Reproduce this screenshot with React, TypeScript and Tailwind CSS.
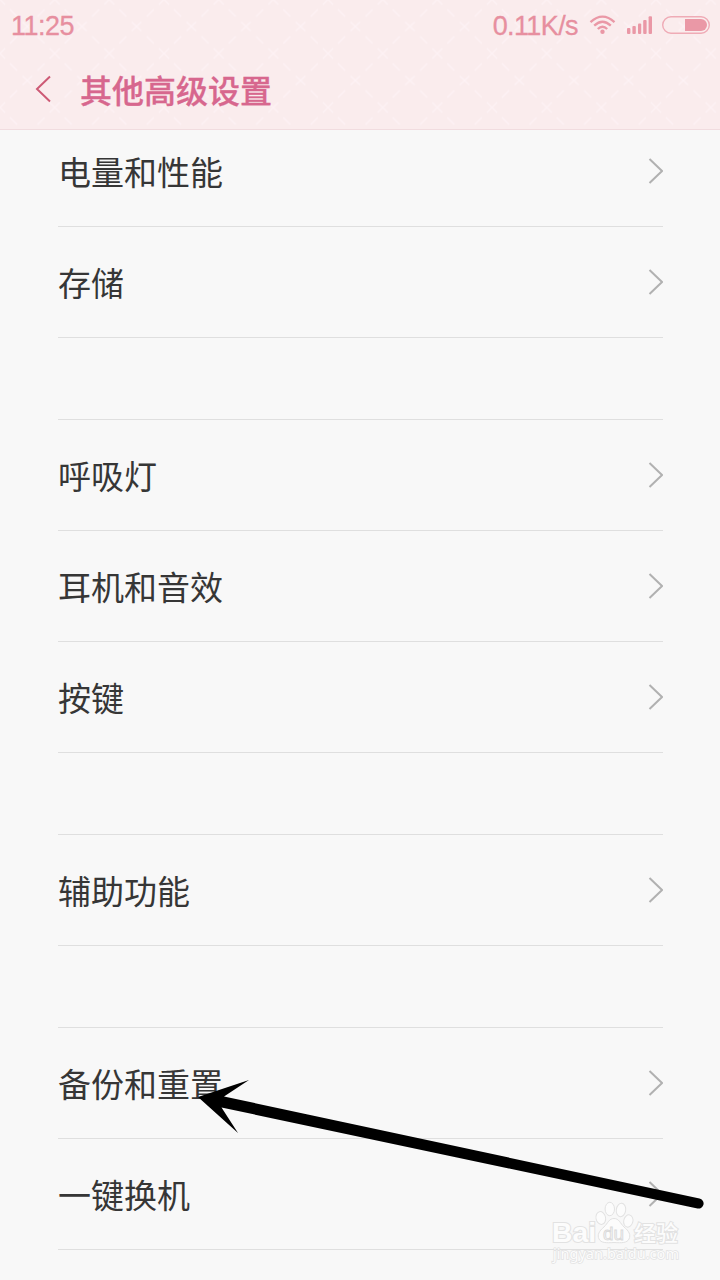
import React from "react";

const rows: { label?: string }[] = [
  { label: "电量和性能" },
  { label: "存储" },
  {},
  { label: "呼吸灯" },
  { label: "耳机和音效" },
  { label: "按键" },
  {},
  { label: "辅助功能" },
  {},
  { label: "备份和重置" },
  { label: "一键换机" },
];

function Lattice() {
  return (
    <svg className="absolute inset-0 h-full w-full" aria-hidden="true">
      <defs>
        <pattern id="lattice" width="54.67" height="54" patternUnits="userSpaceOnUse" y="-0.5">
          <path
            d="M-5 -5L5 5M-5 5L5 -5M49.67 -5L59.67 5M49.67 5L59.67 -5M-5 49L5 59M-5 59L5 49M49.67 49L59.67 59M49.67 59L59.67 49M22.5 22.500L32 31.500M22.500 31.500L32 22.500M10 10L17 17M37.500 37L44.500 44M44.500 10L37.500 17M17 37L10 44"
            stroke="#fdf2f5"
            strokeWidth="1.1"
          />
        </pattern>
      </defs>
      <rect width="100%" height="100%" fill="url(#lattice)" />
    </svg>
  );
}

function StatusIcons() {
  return (
    <svg className="-mt-[5px]" width="122" height="24" viewBox="588 12 122 24" fill="none">
      <g stroke="#ea98a6" strokeWidth="2.3">
        <path d="M590.5 22.200Q602.5 11 614.500 22.200" />
        <path d="M594.2 25.600Q602.5 17.800 610.800 25.600" />
        <path d="M597.8 29Q602.5 24.400 607.200 29" />
      </g>
      <circle cx="602.5" cy="31.8" r="2.2" fill="#ea98a6" />
      <g fill="#ea98a6">
        <rect x="627" y="28" width="3.4" height="6" rx="1" />
        <rect x="632.4" y="26" width="3.4" height="8" rx="1" />
        <rect x="638" y="23.6" width="3.2" height="10.4" rx="1" />
        <rect x="643.2" y="20" width="3.4" height="14" rx="1" />
        <rect x="648.6" y="16.2" width="3.4" height="17.8" rx="1" />
      </g>
      <rect x="662.7" y="16.7" width="46.6" height="16.6" rx="8.3" stroke="#efabb6" strokeWidth="1.4" />
      <path d="M685 19H701A6 6 0 0 1 701 31H685Z" fill="#ea98a6" />
    </svg>
  );
}

function Watermark() {
  return (
    <svg
      className="absolute left-[545px] top-[1196px]"
      width="145"
      height="72"
      viewBox="545 1196 145 72"
      fill="#fcfcfc"
      stroke="#e2e2e2"
      strokeWidth="1"
    >
      <g paintOrder="stroke" strokeWidth="2">
        <text x="552" y="1241.5" fontSize="27" fontWeight="700" textLength="44" lengthAdjust="spacingAndGlyphs" fontFamily="Liberation Sans, sans-serif">Bai</text>
        <text x="634" y="1241" fontSize="22" fontWeight="500" textLength="44" lengthAdjust="spacingAndGlyphs" fontFamily="Noto Sans CJK SC, sans-serif">经验</text>
        <text x="553" y="1259" fontSize="13.5" strokeWidth="1.4" textLength="126" lengthAdjust="spacingAndGlyphs" fontFamily="Noto Sans, sans-serif">jingyan.baidu.com</text>
      </g>
      <ellipse cx="600.8" cy="1218" rx="4.8" ry="6.5" transform="rotate(-12 600.8 1218)" />
      <ellipse cx="609.8" cy="1209" rx="4.7" ry="6.7" />
      <ellipse cx="621" cy="1210" rx="4.7" ry="6.7" transform="rotate(8 621 1210)" />
      <ellipse cx="628.3" cy="1221" rx="4.6" ry="6.2" transform="rotate(12 628.3 1221)" />
      <path d="M614 1218.500C619 1218.500 620 1223 624 1227C629 1231 631 1235 629 1239C627 1243 622 1243 614 1242.500C606 1243 601 1243 599 1239C597 1235 599 1231 604 1227C608 1223 609 1218.500 614 1218.500Z" />
      <text x="603" y="1239.5" fontSize="19" fontWeight="400" fill="#f8f8f8" stroke="#dadada" strokeWidth="0.9" textLength="21" lengthAdjust="spacingAndGlyphs" fontFamily="Liberation Sans, sans-serif">du</text>
    </svg>
  );
}

export default function App() {
  return (
    <div className="relative h-[1280px] w-[720px] overflow-hidden bg-[#f8f8f8] font-['Roboto','Noto_Sans_CJK_SC',sans-serif]">
      <header className="relative h-[130px] border-b border-[#f1dcdf] bg-[#faeced]">
        <Lattice />
        <div className="relative flex h-[52px] items-center justify-between pl-[11px] pr-2.5 font-['Liberation_Sans',sans-serif] text-[27px] text-[#e78f9f] [-webkit-text-stroke:0.3px_#e78f9f]">
          <span className="tracking-[-0.5px]">11:25</span>
          <div className="flex items-center gap-[10px]">
            <span className="tracking-[-0.6px]">0.11K/s</span>
            <StatusIcons />
          </div>
        </div>
        <div className="relative flex h-[77px] items-center pl-[33px]">
          <svg className="-mt-[3px]" width="18" height="28" viewBox="0 0 18 28" fill="none" stroke="#cd5a75" strokeWidth="2">
            <path d="M17 1.500L4 14L17 26.500" />
          </svg>
          <h1 className="ml-[29px] mt-[2px] text-[32px] font-medium leading-none text-[#d7678e] [-webkit-text-stroke:0.3px_#d7678e]">其他高级设置</h1>
        </div>
      </header>

      <main className="-mt-[14px] pl-[58px] pr-[57px]">
        {rows.map((row, i) =>
          row.label ? (
            <div key={i} className="flex h-[111px] items-center justify-between border-b border-[#dfdfdf]">
              <span className="mt-[5px] text-[33px] leading-none text-[#363636]">{row.label}</span>
              <svg width="16" height="28" viewBox="0 0 16 28" fill="none" stroke="#b1b1b1" strokeWidth="2">
                <path d="M2.500 2L15 14L2.500 26" />
              </svg>
            </div>
          ) : (
            <div key={i} className="h-[82px] border-b border-[#dfdfdf]" />
          ),
        )}
      </main>

      <Watermark />
      <svg className="absolute left-[190px] top-[1070px]" width="530" height="150" viewBox="190 1070 530 150">
        <path d="M198 1097L249 1080L224 1096.500L699.500 1198.500A5 5 0 0 1 697.500 1208.500L221.500 1107.500L238 1133Z" />
      </svg>
    </div>
  );
}
